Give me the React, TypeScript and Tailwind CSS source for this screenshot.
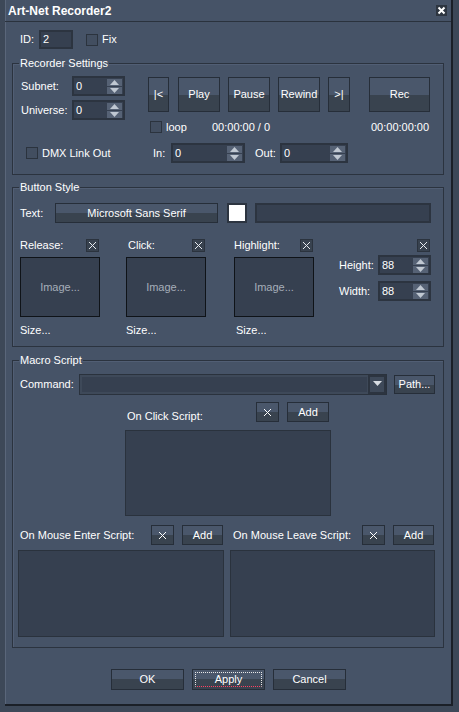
import React from "react";

const BG = "bg-[#465367]";

function Btn({
  w,
  h = 21,
  children,
  className = "",
}: {
  w: number;
  h?: number;
  children?: React.ReactNode;
  className?: string;
}) {
  return (
    <div
      style={{ width: w, height: h }}
      className={
        "shrink-0 flex items-center justify-center border border-[#262e39] bg-[linear-gradient(to_bottom,#4a576b_0%,#4a576b_50%,#39434f_50%,#39434f_100%)] text-white " +
        className
      }
    >
      {children}
    </div>
  );
}

function Spin({ w, value }: { w: number; value: string }) {
  return (
    <div
      style={{ width: w }}
      className="shrink-0 h-[20px] border-2 border-[#2c3440] bg-[#364050] flex items-center"
    >
      <span className="flex-1 pl-[2px] leading-[13px]">{value}</span>
      <div className="flex flex-col gap-[1px] mr-[1px]">
        <div className="w-[15px] h-[7px] bg-[#566275] flex items-center justify-center">
          <svg width="9" height="5" viewBox="0 0 9 5">
            <polygon points="4.5,0 9,5 0,5" fill="#c0c8d2" />
          </svg>
        </div>
        <div className="w-[15px] h-[7px] bg-[#566275] flex items-center justify-center">
          <svg width="9" height="5" viewBox="0 0 9 5">
            <polygon points="0,0 9,0 4.5,5" fill="#c0c8d2" />
          </svg>
        </div>
      </div>
    </div>
  );
}

function Check() {
  return <div className="shrink-0 w-[12px] h-[12px] border border-[#2b333e] bg-[#424e60]" />;
}

function XBox() {
  return (
    <div className="shrink-0 w-[13px] h-[13px] border border-[#2b333e] bg-[#38424f] flex items-center justify-center">
      <svg width="9" height="9" viewBox="0 0 9 9">
        <path d="M1 1 L8 8 M8 1 L1 8" stroke="#e6eaef" strokeWidth="1" />
      </svg>
    </div>
  );
}

function XGlyph() {
  return (
    <svg width="9" height="9" viewBox="0 0 9 9">
      <path d="M1 1 L8 8 M8 1 L1 8" stroke="#ffffff" strokeWidth="1" />
    </svg>
  );
}

function Field({ w, h, className = "" }: { w: number; h: number; className?: string }) {
  return (
    <div
      style={{ width: w, height: h }}
      className={"shrink-0 border border-[#2a323d] bg-[#364050] " + className}
    />
  );
}

function Group({
  title,
  children,
  className = "",
}: {
  title: string;
  children: React.ReactNode;
  className?: string;
}) {
  return (
    <fieldset
      className={
        "ml-[7px] w-[432px] border border-[#2b333f] shadow-[inset_1px_1px_0_#515e74] " + className
      }
    >
      <legend className="ml-[6px] px-[1px] leading-[13px] text-white">{title}</legend>
      {children}
    </fieldset>
  );
}

function ImgBox({ w = 80, h = 60 }: { w?: number; h?: number }) {
  return (
    <div
      style={{ width: w, height: h }}
      className="border border-[#0f1318] bg-[#364050] flex items-center justify-center text-[#a6aeb9]"
    >
      Image...
    </div>
  );
}

export default function App() {
  return (
    <div className="w-[459px] h-[712px] bg-[#3d4858] font-['Liberation_Sans',Arial,sans-serif] text-[11px] text-white overflow-hidden">
      <div
        className={
          "ml-[5px] w-[448px] h-[706px] border-r-2 border-b-2 border-[#1b2028] shadow-[inset_1px_0_0_#5a667a] flex flex-col " +
          BG
        }
      >
        {/* Title bar */}
        <div className="h-[22px] shrink-0 border-b border-[#2a323d] flex items-center justify-between pl-[3px] pr-[4px]">
          <span className="font-bold text-[12px] leading-[14px]">Art-Net Recorder2</span>
          <div className="w-[11px] h-[11px] bg-[#2d3540] flex items-center justify-center">
            <svg width="9" height="9" viewBox="0 0 9 9">
              <path d="M1.5 1.5 L7.5 7.5 M7.5 1.5 L1.5 7.5" stroke="#ffffff" strokeWidth="2" />
            </svg>
          </div>
        </div>

        {/* ID row */}
        <div className="mt-[8px] flex items-center h-[19px] pl-[15px]">
          <span>ID:</span>
          <div className="ml-[5px] w-[34px] h-[19px] border-2 border-[#2c3440] bg-[#364050] flex items-center pl-[2px]">
            2
          </div>
          <div className="ml-[13px]">
            <Check />
          </div>
          <span className="ml-[4px]">Fix</span>
        </div>

        {/* Recorder Settings */}
        <Group title="Recorder Settings" className="mt-[8px] pb-[11px]">
          <div className="mt-[6px] flex">
            <div className="flex flex-col gap-[4px] pl-[8px] w-[135px]">
              <div className="flex items-center">
                <span className="w-[51px]">Subnet:</span>
                <Spin w={53} value="0" />
              </div>
              <div className="flex items-center">
                <span className="w-[51px]">Universe:</span>
                <Spin w={53} value="0" />
              </div>
            </div>
            <div className="flex mt-[1px] h-[35px]">
              <Btn w={21} h={35}>|&lt;</Btn>
              <Btn w={42} h={35} className="ml-[9px]">Play</Btn>
              <Btn w={42} h={35} className="ml-[8px]">Pause</Btn>
              <Btn w={42} h={35} className="ml-[8px]">Rewind</Btn>
              <Btn w={22} h={35} className="ml-[8px]">&gt;|</Btn>
              <Btn w={61} h={35} className="ml-[19px]">Rec</Btn>
            </div>
          </div>
          <div className="mt-[1px] flex items-center h-[12px] pl-[137px]">
            <Check />
            <span className="ml-[4px] w-[46px]">loop</span>
            <span className="w-[159px]">00:00:00 / 0</span>
            <span>00:00:00:00</span>
          </div>
          <div className="mt-[10px] flex items-center h-[20px]">
            <div className="ml-[13px]">
              <Check />
            </div>
            <span className="ml-[4px] w-[111px]">DMX Link Out</span>
            <span className="w-[18px]">In:</span>
            <Spin w={74} value="0" />
            <span className="ml-[10px] w-[25px]">Out:</span>
            <Spin w={68} value="0" />
          </div>
        </Group>

        {/* Button Style */}
        <Group title="Button Style" className="mt-[6px] pb-[9px]">
          <div className="mt-[9px] flex items-center h-[20px]">
            <span className="ml-[7px] w-[35px]">Text:</span>
            <Btn w={163} h={20}>Microsoft Sans Serif</Btn>
            <div className="ml-[9px] w-[20px] h-[20px] border-2 border-[#2c3440] bg-white" />
            <Field w={176} h={20} className="ml-[8px] border-2 border-[#2c3440]" />
          </div>
          <div className="mt-[16px] flex">
            <div className="ml-[7px] w-[80px] flex flex-col">
              <div className="h-[13px] flex items-center justify-between pr-[1px]">
                <span>Release:</span>
                <XBox />
              </div>
              <div className="mt-[5px]">
                <ImgBox />
              </div>
              <span className="mt-[7px] leading-[13px]">Size...</span>
            </div>
            <div className="ml-[26px] w-[80px] flex flex-col">
              <div className="h-[13px] flex items-center justify-between pr-[1px] pl-[2px]">
                <span>Click:</span>
                <XBox />
              </div>
              <div className="mt-[5px]">
                <ImgBox />
              </div>
              <span className="mt-[7px] leading-[13px]">Size...</span>
            </div>
            <div className="ml-[28px] w-[80px] flex flex-col">
              <div className="h-[13px] flex items-center justify-between pr-[1px]">
                <span>Highlight:</span>
                <XBox />
              </div>
              <div className="mt-[5px]">
                <ImgBox />
              </div>
              <span className="mt-[7px] leading-[13px] pl-[2px]">Size...</span>
            </div>
            <div className="ml-[25px] w-[92px] flex flex-col">
              <div className="h-[13px] flex items-center justify-end pr-[1px]">
                <XBox />
              </div>
              <div className="mt-[3px] flex items-center">
                <span className="w-[39px]">Height:</span>
                <Spin w={53} value="88" />
              </div>
              <div className="mt-[6px] flex items-center">
                <span className="w-[39px]">Width:</span>
                <Spin w={53} value="88" />
              </div>
            </div>
          </div>
        </Group>

        {/* Macro Script */}
        <Group title="Macro Script" className="mt-[7px] pb-[10px]">
          <div className="mt-[7px] flex items-center h-[21px]">
            <span className="ml-[7px] w-[59px]">Command:</span>
            <div className="w-[308px] h-[21px] border border-[#2a323d] bg-[#3e4959] flex items-stretch">
              <div className="flex-1 m-[2px] mr-0 bg-[#364050]" />
              <div className="w-[18px] ml-[1px] border-2 border-[#2c3440] bg-[#3e4959] flex justify-center pt-[4px]">
                <svg width="9" height="5" viewBox="0 0 9 5">
                  <polygon points="0,0 9,0 4.5,5" fill="#d8dde3" />
                </svg>
              </div>
            </div>
            <Btn w={41} h={19} className="ml-[7px]">Path...</Btn>
          </div>
          <div className="mt-[7px] flex items-center h-[20px]">
            <span className="ml-[114px] w-[129px] mt-[8px]">On Click Script:</span>
            <Btn w={23} h={20}><XGlyph /></Btn>
            <Btn w={42} h={20} className="ml-[8px]">Add</Btn>
          </div>
          <div className="mt-[8px] ml-[112px]">
            <Field w={206} h={86} />
          </div>
          <div className="mt-[9px] flex items-center h-[20px]">
            <span className="ml-[7px] w-[131px]">On Mouse Enter Script:</span>
            <Btn w={23} h={20}><XGlyph /></Btn>
            <Btn w={41} h={20} className="ml-[8px]">Add</Btn>
            <span className="ml-[10px] w-[129px]">On Mouse Leave Script:</span>
            <Btn w={23} h={20}><XGlyph /></Btn>
            <Btn w={41} h={20} className="ml-[8px]">Add</Btn>
          </div>
          <div className="mt-[5px] flex">
            <Field w={206} h={87} className="ml-[5px]" />
            <Field w={205} h={87} className="ml-[6px]" />
          </div>
        </Group>

        {/* Bottom buttons */}
        <div className="mt-[21px] flex pl-[106px]">
          <Btn w={73} h={21}>OK</Btn>
          <Btn w={73} h={21} className="ml-[8px] relative">
            <span className="absolute inset-[2px] border border-dotted border-[#e8e8e8] border-b-[#ff4060]" />
            <span className="relative">Apply</span>
          </Btn>
          <Btn w={73} h={21} className="ml-[8px]">Cancel</Btn>
        </div>
      </div>
    </div>
  );
}
